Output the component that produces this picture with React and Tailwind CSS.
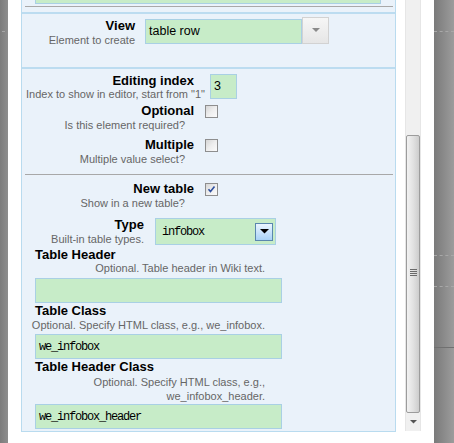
import React from "react";

function Checkbox({ checked }) {
  return (
    <div className="w-[13px] h-[13px] border border-[#8e8e8e] bg-gradient-to-br from-[#d6d6d6] via-[#eeeeee] to-[#fbfbfb] flex items-center justify-center shrink-0">
      {checked && (
        <svg width="9" height="9" viewBox="0 0 9 9">
          <path d="M1.5 4.2 L3.5 6.5 L7.5 1.5" fill="none" stroke="#2d4f9e" strokeWidth="1.6" />
        </svg>
      )}
    </div>
  );
}

function GreenInput({ className = "", children, textClass = "" }) {
  return (
    <div className={"bg-[#c7ecc8] border border-[#a9d0e4] flex items-center " + className}>
      <span className={textClass}>{children}</span>
    </div>
  );
}

const mono = "font-['Liberation_Mono','DejaVu_Sans_Mono',monospace] text-[12px] tracking-[-1.2px] text-black";

export default function App() {
  return (
    <div className="w-[454px] h-[443px] flex bg-white overflow-hidden font-['Liberation_Sans',Arial,sans-serif]">
      {/* left gray strip */}
      <div className="w-[8px] h-full bg-gradient-to-r from-[#7c7c7c] to-[#8e8e8e] flex flex-col shrink-0">
        <div className="h-[31px]" />
        <div className="h-px w-[3px] ml-[2px] bg-[#a6a6a6]" />
      </div>
      <div className="w-[13px] shrink-0" />

      {/* panel */}
      <div className="w-[375px] h-[432px] shrink-0 bg-[#eaf2fa] border-x border-b border-[#b9dbef] flex flex-col">
        {/* top remnant */}
        <div className="h-[12px] flex flex-col">
          <div className="ml-[13px] w-[346px] h-[4px] bg-[#c7ecc8] border-x border-b border-[#a9d0e4]" />
          <div className="mt-[2px] ml-[3px] w-[368px] h-px bg-[#a8a8a8]" />
        </div>
        <div className="h-[2px] bg-[#bcdcf0]" />

        {/* View section */}
        <div className="h-[53px] pt-[3px] flex items-start">
          <div className="w-[113px] mt-[1px] flex flex-col items-end">
            <div className="text-[13px] leading-[15px] font-bold text-black">View</div>
            <div className="text-[11px] leading-[13px] text-[#666] mt-[1px] whitespace-nowrap">Element to create</div>
          </div>
          <GreenInput className="ml-[10px] mt-[2px] w-[157px] h-[25px] pl-[3px]" textClass="text-[12.5px] text-black">
            table row
          </GreenInput>
          <div className="w-[27px] h-[27px] border border-[#d2d2d2] bg-gradient-to-b from-[#f6f6f6] to-[#e6e6e6] flex items-center justify-center">
            <svg width="8" height="5" viewBox="0 0 8 5">
              <path d="M0 0 L8 0 L4 4 Z" fill="#8a8a8a" />
            </svg>
          </div>
        </div>
        <div className="h-[2px] bg-[#bcdcf0]" />

        {/* main section */}
        <div className="flex flex-col pt-[4px]">
          {/* Editing index */}
          <div className="flex items-start">
            <div className="w-[183px] flex flex-col items-end">
              <div className="text-[13px] leading-[15px] font-bold text-black mr-[11px]">Editing index</div>
              <div className="text-[11px] leading-[13px] text-[#666] whitespace-nowrap">Index to show in editor, start from "1"</div>
            </div>
            <GreenInput className="ml-[5px] mt-[1px] w-[27px] h-[25px] pl-[3px]" textClass="text-[12.5px] text-black">
              3
            </GreenInput>
          </div>

          {/* Optional */}
          <div className="flex items-start mt-[2px]">
            <div className="w-[172px] flex flex-col items-end">
              <div className="text-[13px] leading-[15px] font-bold text-black">Optional</div>
              <div className="text-[11px] leading-[13px] text-[#666] mt-[1px] mr-[9px] whitespace-nowrap">Is this element required?</div>
            </div>
            <div className="ml-[11px] mt-[2px]">
              <Checkbox />
            </div>
          </div>

          {/* Multiple */}
          <div className="flex items-start mt-[5px]">
            <div className="w-[172px] flex flex-col items-end">
              <div className="text-[13px] leading-[15px] font-bold text-black">Multiple</div>
              <div className="text-[11px] leading-[13px] text-[#666] mt-[1px] mr-[9px] whitespace-nowrap">Multiple value select?</div>
            </div>
            <div className="ml-[11px] mt-[2px]">
              <Checkbox />
            </div>
          </div>

          <div className="mt-[8px] ml-[3px] w-[368px] h-px bg-[#a8a8a8]" />

          {/* New table */}
          <div className="flex items-start mt-[6px]">
            <div className="w-[172px] flex flex-col items-end">
              <div className="text-[13px] leading-[15px] font-bold text-black">New table</div>
              <div className="text-[11px] leading-[13px] text-[#666] mt-[1px] mr-[9px] whitespace-nowrap">Show in a new table?</div>
            </div>
            <div className="ml-[11px] mt-[2px]">
              <Checkbox checked />
            </div>
          </div>

          {/* Type */}
          <div className="flex items-start mt-[7px]">
            <div className="w-[122px] flex flex-col items-end">
              <div className="text-[13px] leading-[15px] font-bold text-black">Type</div>
              <div className="text-[11px] leading-[13px] text-[#666] mt-[1px] whitespace-nowrap">Built-in table types.</div>
            </div>
            <div className="ml-[11px] mt-[1px] w-[121px] h-[27px] bg-[#c7ecc8] border border-[#a9d0e4] flex items-center pl-[6px] pr-[2px]">
              <span className={mono + " flex-1"}>infobox</span>
              <div className="w-[18px] h-[18px] border border-[#5a87ae] bg-gradient-to-b from-[#eaf5ff] to-[#a9d3f7] flex items-center justify-center">
                <svg width="9" height="5" viewBox="0 0 9 5">
                  <path d="M0 0 L9 0 L4.5 4.5 Z" fill="#000" />
                </svg>
              </div>
            </div>
          </div>

          {/* Table Header */}
          <div className="mt-[1px] ml-[13px] text-[13px] leading-[15px] font-bold text-black">Table Header</div>
          <div className="w-[243px] text-right text-[11px] leading-[13px] text-[#666] whitespace-nowrap">Optional. Table header in Wiki text.</div>
          <GreenInput className="mt-[3px] ml-[13px] w-[247px] h-[25px] pl-[3px]" />

          {/* Table Class */}
          <div className="ml-[13px] text-[13px] leading-[15px] font-bold text-black">Table Class</div>
          <div className="w-[243px] mt-[1px] text-right text-[11px] leading-[13px] text-[#666] whitespace-nowrap">Optional. Specify HTML class, e.g., we_infobox.</div>
          <GreenInput className="mt-[2px] ml-[13px] w-[247px] h-[25px] pl-[3px]" textClass={mono}>
            we_infobox
          </GreenInput>

          {/* Table Header Class */}
          <div className="ml-[13px] text-[13px] leading-[15px] font-bold text-black">Table Header Class</div>
          <div className="w-[243px] mt-[1px] text-right text-[11px] leading-[14px] text-[#666] whitespace-nowrap">
            Optional. Specify HTML class, e.g.,
            <br />
            we_infobox_header.
          </div>
          <GreenInput className="mt-[1px] ml-[13px] w-[247px] h-[25px] pl-[3px]" textClass={mono}>
            we_infobox_header
          </GreenInput>
        </div>
      </div>

      <div className="w-[9px] shrink-0" />

      {/* scrollbar */}
      <div className="w-[16px] h-[431px] shrink-0 bg-[#f0f0f0] border-x border-[#e6e6e6] flex flex-col">
        <div className="h-[135px]" />
        <div className="h-[278px] rounded-[2px] border border-[#9c9c9c] bg-gradient-to-r from-[#f2f2f2] via-[#e2e2e2] to-[#cdcdcd] flex items-center justify-center">
          <div className="flex flex-col gap-[1px] mt-[-4px]">
            <div className="w-[7px] h-px bg-[#6a6a6a]" />
            <div className="w-[7px] h-px bg-[#6a6a6a]" />
            <div className="w-[7px] h-px bg-[#6a6a6a]" />
            <div className="w-[7px] h-px bg-[#6a6a6a]" />
          </div>
        </div>
        <div className="h-[18px] flex items-center justify-center">
          <svg width="7" height="4" viewBox="0 0 7 4">
            <path d="M0 0 L7 0 L3.5 3.5 Z" fill="#555" />
          </svg>
        </div>
      </div>

      <div className="w-[13px] shrink-0" />

      {/* right gray */}
      <div className="w-[20px] h-full shrink-0 bg-gradient-to-r from-[#7a7a7a] to-[#9c9c9c] flex flex-col">
        <div className="h-[31px]" />
        <div className="h-px border-t border-dashed border-[#a8a8a8]" />
        <div className="h-[223px]" />
        <div className="h-px border-t border-dashed border-[#a8a8a8]" />
        <div className="h-[30px]" />
        <div className="h-px border-t border-dashed border-[#a8a8a8]" />
        <div className="h-[60px]" />
        <div className="h-px bg-[#707070]" />
      </div>
    </div>
  );
}
